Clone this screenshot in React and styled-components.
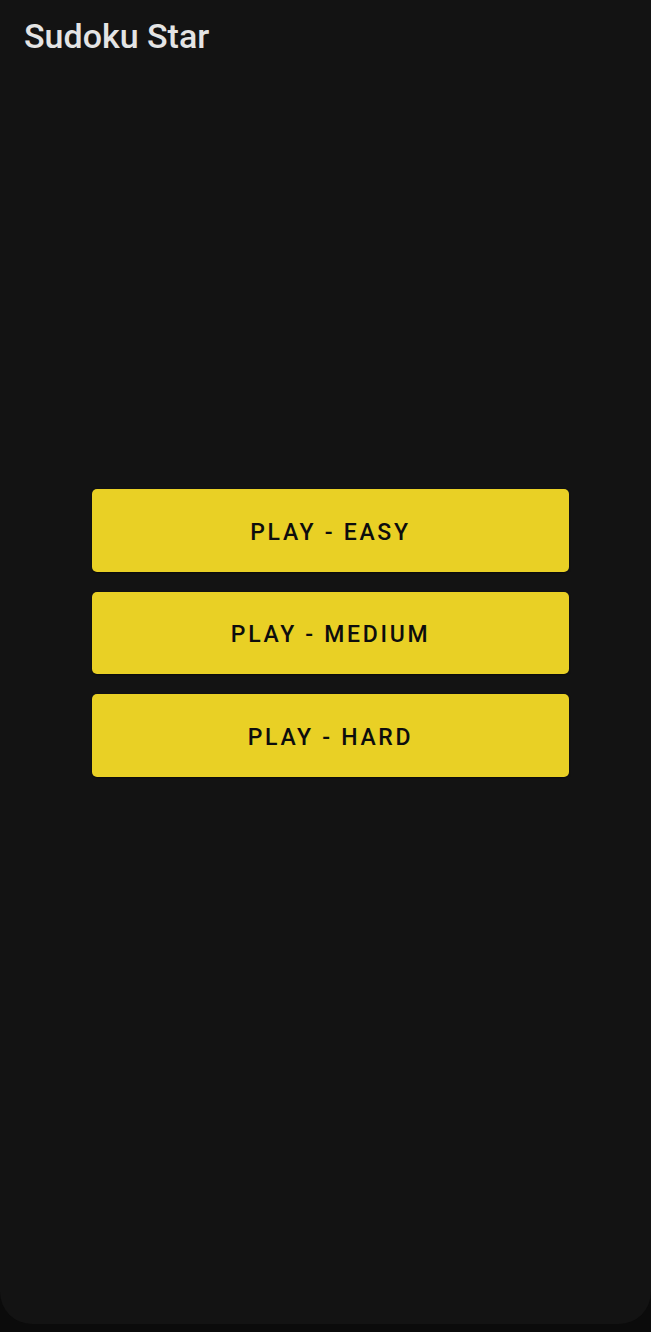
import React from 'react';
import styled, { createGlobalStyle } from 'styled-components';

const GlobalStyle = createGlobalStyle`
  html, body {
    margin: 0;
    padding: 0;
    background: #0b0b0b;
  }
  * { box-sizing: border-box; }
`;

const levels = ['Easy', 'Medium', 'Hard'];

function App() {
  return (
    <>
      <GlobalStyle />
      <Screen>
        <AppBar>
          <Title>Sudoku Star</Title>
        </AppBar>
        <Main>
          <ButtonStack>
            {levels.map(level => (
              <PlayButton key={level}>Play - {level}</PlayButton>
            ))}
          </ButtonStack>
        </Main>
      </Screen>
    </>
  );
}

const Screen = styled.div`
  width: 651px;
  height: 1324px;
  background: #131313;
  border-radius: 0 0 32px 32px;
  display: flex;
  flex-direction: column;
  overflow: hidden;
`;

const AppBar = styled.header`
  height: 70px;
  padding: 0 24px;
  display: flex;
  align-items: flex-start;
`;

const Title = styled.h1`
  margin: 16px 0 0;
  font-family: Roboto, "Liberation Sans", sans-serif;
  font-weight: 500;
  font-size: 34px;
  line-height: 40px;
  color: #e4e4e4;
`;

const Main = styled.main`
  flex: 1;
  display: flex;
  flex-direction: column;
  justify-content: center;
  align-items: flex-start;
  padding: 0 0 128px 92px;
`;

const ButtonStack = styled.div`
  width: 477px;
  display: flex;
  flex-direction: column;
  gap: 20px;
`;

const PlayButton = styled.button`
  height: 82.5px;
  padding: 3px 0 0;
  border: none;
  border-radius: 5px;
  background: #e9d025;
  color: #0d0d0d;
  font-family: Roboto, "Liberation Sans", sans-serif;
  font-weight: 500;
  font-size: 23px;
  letter-spacing: 2.7px;
  text-transform: uppercase;
  box-shadow: 0 1px 2px rgba(0, 0, 0, 0.5);
  cursor: pointer;
`;

export default App;
